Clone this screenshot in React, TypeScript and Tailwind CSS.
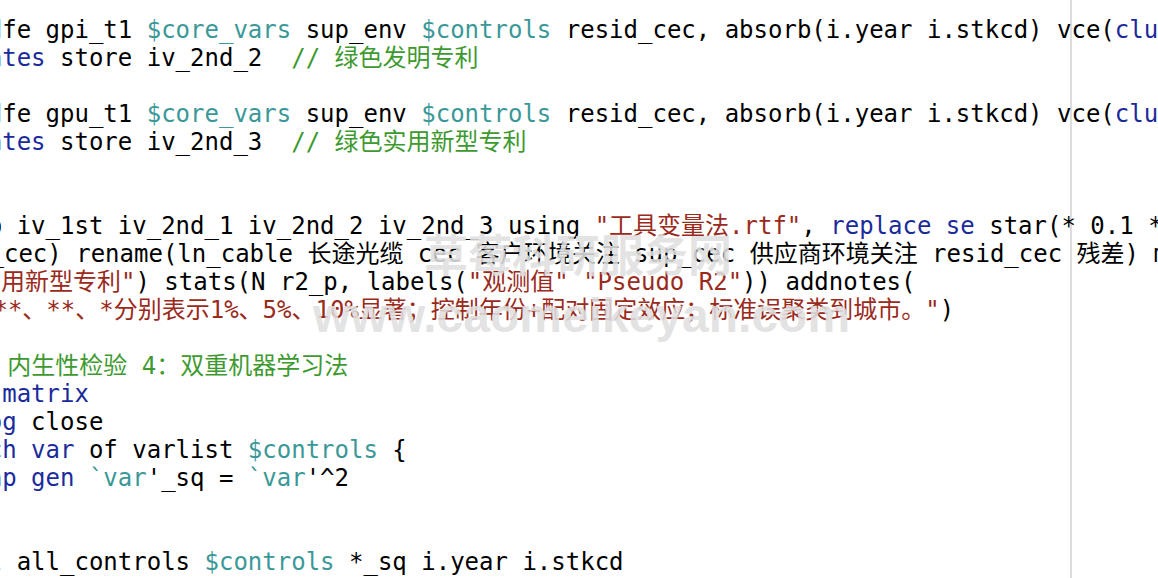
import React from "react";

type Seg = [string, string];
const K = "text-[#1b2b9b]";
const S = "text-[#9a2a1c]";
const C = "text-[#3e9a30]";
const M = "text-[#3a9898]";
const P = "text-black";

type Line = { ml: string; segs: Seg[] };

const G = "-ml-[84.5px]";

const lines: Line[] = [
  {
    ml: G,
    segs: [
      [P, " reghdfe gpi_t1 "],
      [M, "$core_vars"],
      [P, " sup_env "],
      [M, "$controls"],
      [P, " resid_cec, absorb(i.year i.stkcd) vce("],
      [K, "cluster"],
      [P, " city)"],
    ],
  },
  { ml: G, segs: [[K, "estimates"], [P, " store iv_2nd_2  "], [C, "// 绿色发明专利"]] },
  { ml: G, segs: [[P, " "]] },
  {
    ml: G,
    segs: [
      [P, " reghdfe gpu_t1 "],
      [M, "$core_vars"],
      [P, " sup_env "],
      [M, "$controls"],
      [P, " resid_cec, absorb(i.year i.stkcd) vce("],
      [K, "cluster"],
      [P, " city)"],
    ],
  },
  { ml: G, segs: [[K, "estimates"], [P, " store iv_2nd_3  "], [C, "// 绿色实用新型专利"]] },
  { ml: G, segs: [[P, " "]] },
  { ml: G, segs: [[P, " "]] },
  {
    ml: G,
    segs: [
      [P, "esttab iv_1st iv_2nd_1 iv_2nd_2 iv_2nd_3 using "],
      [S, "\"工具变量法.rtf\""],
      [P, ", "],
      [K, "replace"],
      [P, " "],
      [K, "se"],
      [P, " star(* 0.1 ** 0.05 *** 0.01)"],
    ],
  },
  {
    ml: "-ml-[10.5px]",
    segs: [
      [P, "_cec) rename(ln_cable 长途光缆 cec 客户环境关注 sup_cec 供应商环境关注 resid_cec 残差) mtitles("],
    ],
  },
  {
    ml: "-ml-[23px]",
    segs: [
      [S, "实用新型专利\""],
      [P, ") stats(N r2_p, labels("],
      [S, "\"观测值\""],
      [P, " "],
      [S, "\"Pseudo R2\""],
      [P, ")) addnotes("],
    ],
  },
  {
    ml: "-ml-[21px]",
    segs: [
      [S, "***、**、*分别表示1%、5%、10%显著；控制年份+配对固定效应；标准误聚类到城市。\""],
      [P, ")"],
    ],
  },
  { ml: G, segs: [[P, " "]] },
  { ml: "-ml-[36px]", segs: [[C, "// 内生性检验 4：双重机器学习法"]] },
  { ml: G, segs: [[K, "clear matrix"]] },
  { ml: G, segs: [[K, "cap log"], [P, " close"]] },
  {
    ml: G,
    segs: [
      [K, "foreach"],
      [P, " "],
      [K, "var"],
      [P, " of varlist "],
      [M, "$controls"],
      [P, " {"],
    ],
  },
  {
    ml: G,
    segs: [
      [P, "    "],
      [K, "cap gen"],
      [P, " "],
      [M, "`var"],
      [P, "'_sq = "],
      [M, "`var"],
      [P, "'^2"],
    ],
  },
  { ml: G, segs: [[P, "}"]] },
  { ml: G, segs: [[P, " "]] },
  {
    ml: G,
    segs: [
      [K, "global"],
      [P, " all_controls "],
      [M, "$controls"],
      [P, " *_sq i.year i.stkcd"],
    ],
  },
];

export default function App() {
  return (
    <div className="relative w-[1158px] h-[578px] overflow-hidden bg-white bg-[linear-gradient(to_right,transparent_1070px,#dddddd_1070px,#dddddd_1072px,transparent_1072px)]">
      <div
        className="pt-[16px] text-[24px]"
        style={{ fontFamily: '"DejaVu Sans Mono", "Noto Sans CJK SC", monospace' }}
      >
        {lines.map((l, i) => (
          <div key={i} className={`h-[28px] leading-[28px] whitespace-pre ${l.ml}`}>
            {l.segs.map((s, j) => (
              <span key={j} className={s[0]}>
                {s[1]}
              </span>
            ))}
          </div>
        ))}
      </div>
      <div
        className="absolute left-[424px] top-[231px] text-[44px] leading-none font-bold text-[rgba(224,224,224,0.9)] whitespace-pre"
        style={{ fontFamily: '"Noto Sans CJK SC", sans-serif' }}
      >
        草莓科研服务网
      </div>
      <div
        className="absolute left-[313px] top-[292px] text-[48px] leading-none font-bold text-[rgba(224,224,224,0.9)] whitespace-pre"
        style={{ fontFamily: '"Liberation Sans", Arial, sans-serif' }}
      >
        www.caomeikeyan.com
      </div>
    </div>
  );
}
